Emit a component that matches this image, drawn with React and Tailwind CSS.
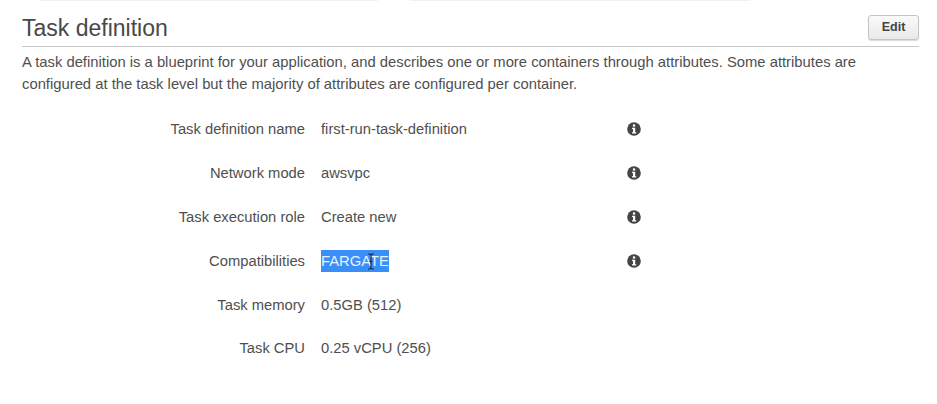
const rows = [
  { label: "Task definition name", value: "first-run-task-definition", info: true },
  { label: "Network mode", value: "awsvpc", info: true },
  { label: "Task execution role", value: "Create new", info: true },
  { label: "Compatibilities", value: "FARGATE", info: true, selected: true },
  { label: "Task memory", value: "0.5GB (512)" },
  { label: "Task CPU", value: "0.25 vCPU (256)" },
];

function InfoIcon() {
  return (
    <svg width="14" height="14" viewBox="0 0 14 14">
      <circle cx="7" cy="7" r="6.8" fill="#444444" />
      <rect x="5.9" y="2.4" width="2.3" height="2.2" fill="#ffffff" />
      <path d="M5 5.7h3.2v4.5h1v1.3H5v-1.3h1V7H5z" fill="#ffffff" />
    </svg>
  );
}

function TextCursor() {
  return (
    <svg className="absolute left-[46px] top-[3px]" width="8" height="17" viewBox="0 0 8 17">
      <path d="M1 1h2l1 1 1-1h2M4 2v13M1 16h2l1-1 1 1h2M2.5 8.5h3" fill="none" stroke="#1d2b4a" strokeWidth="1.2" />
    </svg>
  );
}

function Row({ label, value, info, selected }) {
  return (
    <div className="flex h-[43.8px] items-center text-[14.75px] text-[#4f4f4f]">
      <div className="w-[283px] text-right">{label}</div>
      <div className="ml-4 w-[306px]">
        {selected ? (
          <span className="relative inline-block bg-[#3a8ef8] leading-[22px] text-[#e8f2ff]">
            {value}
            <TextCursor />
          </span>
        ) : (
          value
        )}
      </div>
      {info && <InfoIcon />}
    </div>
  );
}

export default function App() {
  return (
    <div className="h-[404px] w-[937px] overflow-hidden bg-white font-['Liberation_Sans',Arial,sans-serif]">
      <div className="flex gap-8 pl-[40px]">
        <div className="h-px w-[338px] bg-[#f1f1f1]"></div>
        <div className="h-px w-[340px] bg-[#f1f1f1]"></div>
      </div>

      <div className="pl-[22px] pr-[18px] pt-[13px]">
        <div className="flex items-center justify-between border-b border-[#c9c9c9] pb-[4px]">
          <h2 className="text-[23px] leading-[28px] text-[#484848]">Task definition</h2>
          <button className="mb-[1px] h-[25px] w-[51px] rounded-[3px] border border-[#c4c4c4] bg-gradient-to-b from-[#fafafa] to-[#e9e9e9] text-[12.5px] font-bold text-[#444444] shadow-[0_1px_1px_rgba(0,0,0,0.15)]">
            Edit
          </button>
        </div>

        <p className="mt-[4px] text-[14.8px] leading-[22px] text-[#4f4f4f]">
          A task definition is a blueprint for your application, and describes one or more containers through attributes. Some attributes are
          configured at the task level but the majority of attributes are configured per container.
        </p>

        <div className="mt-[12.5px]">
          {rows.map((row) => (
            <Row key={row.label} {...row} />
          ))}
        </div>
      </div>
    </div>
  );
}
